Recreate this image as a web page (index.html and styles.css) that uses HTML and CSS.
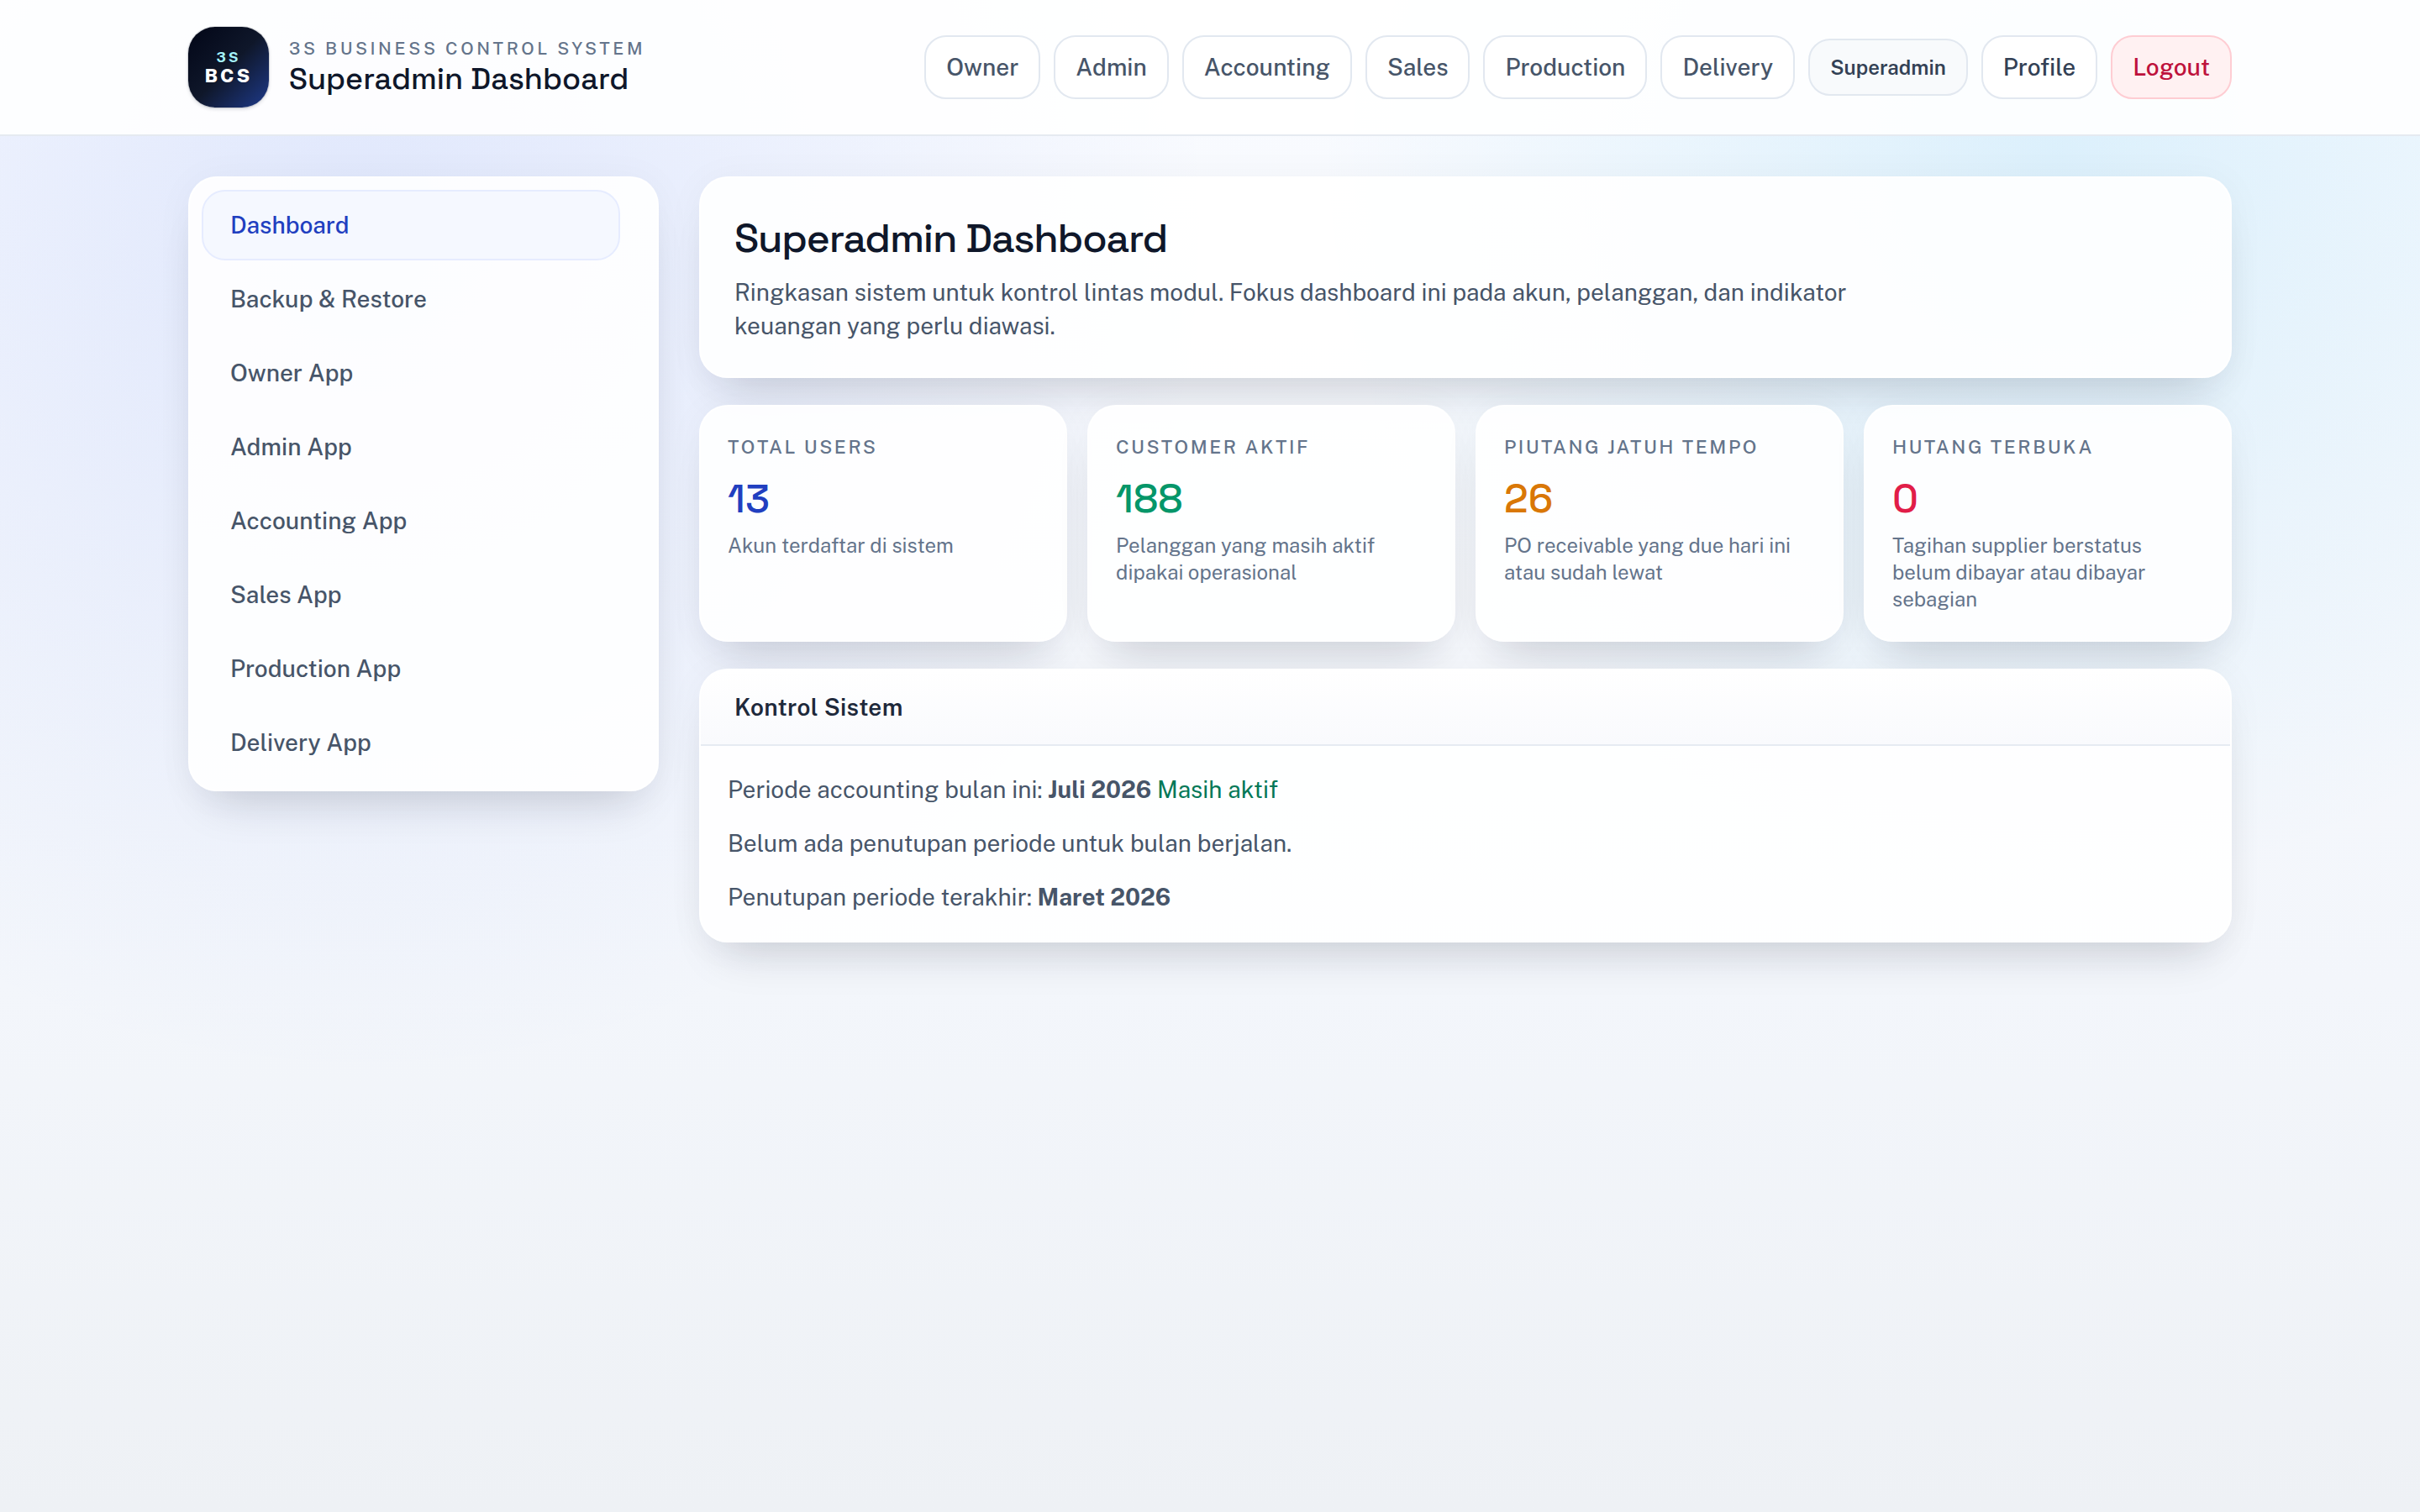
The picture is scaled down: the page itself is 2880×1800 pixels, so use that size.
FILE: index.html
```html
<!DOCTYPE html>
<html lang="id">
<head>
    <meta charset="UTF-8">
    <meta name="viewport" content="width=device-width, initial-scale=1.0">
    <title>Superadmin Dashboard</title>
    <link rel="stylesheet" href="styles.css">
</head>
<body>
    <header class="topbar">
        <div class="topbar-inner">
            <div class="brand">
                <div class="brand-mark">
                    <span class="brand-mark-top">3S</span>
                    <span class="brand-mark-bottom">BCS</span>
                </div>
                <div class="brand-text">
                    <div class="brand-kicker">3S Business Control System</div>
                    <div class="brand-title">Superadmin Dashboard</div>
                </div>
            </div>
            <nav class="topnav">
                <a class="nav-btn">Owner</a>
                <a class="nav-btn">Admin</a>
                <a class="nav-btn">Accounting</a>
                <a class="nav-btn">Sales</a>
                <a class="nav-btn">Production</a>
                <a class="nav-btn">Delivery</a>
                <span class="role-badge">Superadmin</span>
                <a class="nav-btn profile">Profile</a>
                <a class="nav-btn logout">Logout</a>
            </nav>
        </div>
    </header>

    <div class="layout">
        <aside class="sidebar card">
            <a class="side-link active">Dashboard</a>
            <a class="side-link">Backup &amp; Restore</a>
            <a class="side-link">Owner App</a>
            <a class="side-link">Admin App</a>
            <a class="side-link">Accounting App</a>
            <a class="side-link">Sales App</a>
            <a class="side-link">Production App</a>
            <a class="side-link">Delivery App</a>
        </aside>

        <main class="content">
            <section class="hero card">
                <h1 class="hero-title">Superadmin Dashboard</h1>
                <p class="hero-text">Ringkasan sistem untuk kontrol lintas modul. Fokus dashboard ini pada akun, pelanggan, dan indikator keuangan yang perlu diawasi.</p>
            </section>

            <section class="stats">
                <div class="stat card">
                    <div class="stat-label">Total Users</div>
                    <div class="stat-value blue">13</div>
                    <div class="stat-desc">Akun terdaftar di sistem</div>
                </div>
                <div class="stat card">
                    <div class="stat-label">Customer Aktif</div>
                    <div class="stat-value green">188</div>
                    <div class="stat-desc">Pelanggan yang masih aktif dipakai operasional</div>
                </div>
                <div class="stat card">
                    <div class="stat-label">Piutang Jatuh Tempo</div>
                    <div class="stat-value amber">26</div>
                    <div class="stat-desc">PO receivable yang due hari ini atau sudah lewat</div>
                </div>
                <div class="stat card">
                    <div class="stat-label">Hutang Terbuka</div>
                    <div class="stat-value red">0</div>
                    <div class="stat-desc">Tagihan supplier berstatus belum dibayar atau dibayar sebagian</div>
                </div>
            </section>

            <section class="panel card">
                <div class="panel-header">Kontrol Sistem</div>
                <div class="panel-body">
                    <p>Periode accounting bulan ini: <strong>Juli 2026</strong> <span class="status-ok">Masih aktif</span></p>
                    <p>Belum ada penutupan periode untuk bulan berjalan.</p>
                    <p>Penutupan periode terakhir: <strong>Maret 2026</strong></p>
                </div>
            </section>
        </main>
    </div>
</body>
</html>
```

FILE: styles.css
```css
* {
    box-sizing: border-box;
    margin: 0;
    padding: 0;
}

body {
    min-height: 100vh;
    font-family: 'Public Sans', Inter, 'Liberation Sans', sans-serif;
    font-size: 28px;
    line-height: 40px;
    color: #475569;
    background:
        radial-gradient(circle at 15% 15%, rgba(62, 104, 238, 0.13), transparent 35%),
        radial-gradient(circle at 85% 10%, rgba(14, 165, 233, 0.12), transparent 30%),
        linear-gradient(180deg, #f9fbff 0%, #f3f6fb 65%, #eef1f5 100%);
}

/* Top bar */
.topbar {
    background: rgba(255, 255, 255, 0.9);
    border-bottom: 2px solid #e5eaf1;
}

.topbar-inner {
    display: flex;
    align-items: center;
    justify-content: space-between;
    height: 160px;
    padding: 0 224px;
}

.brand {
    display: flex;
    align-items: center;
    gap: 24px;
}

.brand-mark {
    display: flex;
    flex-direction: column;
    align-items: center;
    justify-content: center;
    width: 96px;
    height: 96px;
    border-radius: 32px;
    background: linear-gradient(135deg, #020617 0%, #0f172a 50%, #1e3a8a 100%);
    box-shadow: 0 0 0 1px rgba(15, 23, 42, 0.12), 0 2px 4px rgba(15, 23, 42, 0.15);
    font-weight: 700;
    text-align: center;
}

.brand-mark-top {
    font-size: 17px;
    line-height: 20px;
    letter-spacing: 0.18em;
    color: #a5f3fc;
}

.brand-mark-bottom {
    font-size: 22.4px;
    line-height: 24px;
    font-weight: 800;
    letter-spacing: 0.14em;
    color: #fff;
}

.brand-kicker {
    font-size: 20.8px;
    line-height: 28px;
    font-weight: 500;
    letter-spacing: 0.172em;
    text-transform: uppercase;
    color: #64748b;
}

.brand-title {
    font-family: 'Space Grotesk', Inter, sans-serif;
    font-size: 36px;
    line-height: 44px;
    font-weight: 500;
    color: #0f172a;
}

.topnav {
    display: flex;
    align-items: center;
    gap: 16px;
}

.nav-btn,
.role-badge {
    padding: 16px 24px;
    border: 2px solid #e2e8f0;
    border-radius: 26px;
    background: #fff;
    font-weight: 500;
}

.role-badge {
    background: #f8fafc;
    color: #334155;
    font-size: 24px;
    line-height: 32px;
    font-weight: 600;
}

.nav-btn.profile {
    color: #334155;
}

.nav-btn.logout {
    background: #fff1f2;
    border-color: #fecdd3;
    color: #be123c;
}

/* Layout */
.layout {
    display: flex;
    align-items: flex-start;
    gap: 48px;
    padding: 48px 224px;
}

.card {
    border: 2px solid rgba(255, 255, 255, 0.7);
    border-radius: 34px;
    background: rgba(255, 255, 255, 0.9);
    box-shadow: 0 36px 56px -28px rgba(15, 23, 42, 0.18), 0 4px 48px rgba(15, 23, 42, 0.04);
}

.sidebar {
    display: flex;
    flex-direction: column;
    flex: none;
    gap: 4px;
    width: 560px;
    padding: 14px 44px 14px 14px;
}

.side-link {
    padding: 20px 32px;
    border: 2px solid transparent;
    border-radius: 28px;
    font-weight: 500;
}

.side-link.active {
    background: #f5f8ff;
    border-color: #e6ecff;
    color: #213fc0;
}

.content {
    display: flex;
    flex-direction: column;
    flex: 1;
    gap: 32px;
    min-width: 0;
}

/* Hero */
.hero {
    padding: 41px 40px 40px;
}

.hero-title {
    margin-bottom: 13px;
    font-family: 'Space Grotesk', Inter, sans-serif;
    font-size: 48px;
    line-height: 62px;
    font-weight: 500;
    letter-spacing: -0.025em;
    color: #0f172a;
}

.hero-text {
    max-width: 1400px;
}

/* Stats */
.stats {
    display: grid;
    grid-template-columns: repeat(4, 1fr);
    gap: 24px;
}

.stat {
    min-height: 282px;
    padding: 32px;
}

.stat-label {
    font-size: 22.4px;
    line-height: 32px;
    font-weight: 500;
    letter-spacing: 0.112em;
    text-transform: uppercase;
    color: #64748b;
}

.stat-value {
    margin: 17px 0 10px;
    font-family: 'Space Grotesk', Inter, sans-serif;
    font-size: 48px;
    line-height: 58px;
    font-weight: 500;
}

.stat-value.blue {
    color: #213fc0;
}

.stat-value.green {
    color: #059669;
}

.stat-value.amber {
    color: #d97706;
}

.stat-value.red {
    color: #e11d48;
}

.stat-desc {
    font-size: 24px;
    line-height: 32px;
    color: #64748b;
}

/* Panel */
.panel {
    overflow: hidden;
}

.panel-header {
    padding: 24px 40px;
    border-bottom: 2px solid #e6ebf2;
    background: linear-gradient(180deg, #fff, #f9fafd);
    color: #1e293b;
    font-weight: 600;
    letter-spacing: 0.01em;
}

.panel-body {
    display: flex;
    flex-direction: column;
    gap: 24px;
    padding: 32px;
}

.panel-body strong {
    font-weight: 700;
}

.status-ok {
    color: #047857;
}
```
